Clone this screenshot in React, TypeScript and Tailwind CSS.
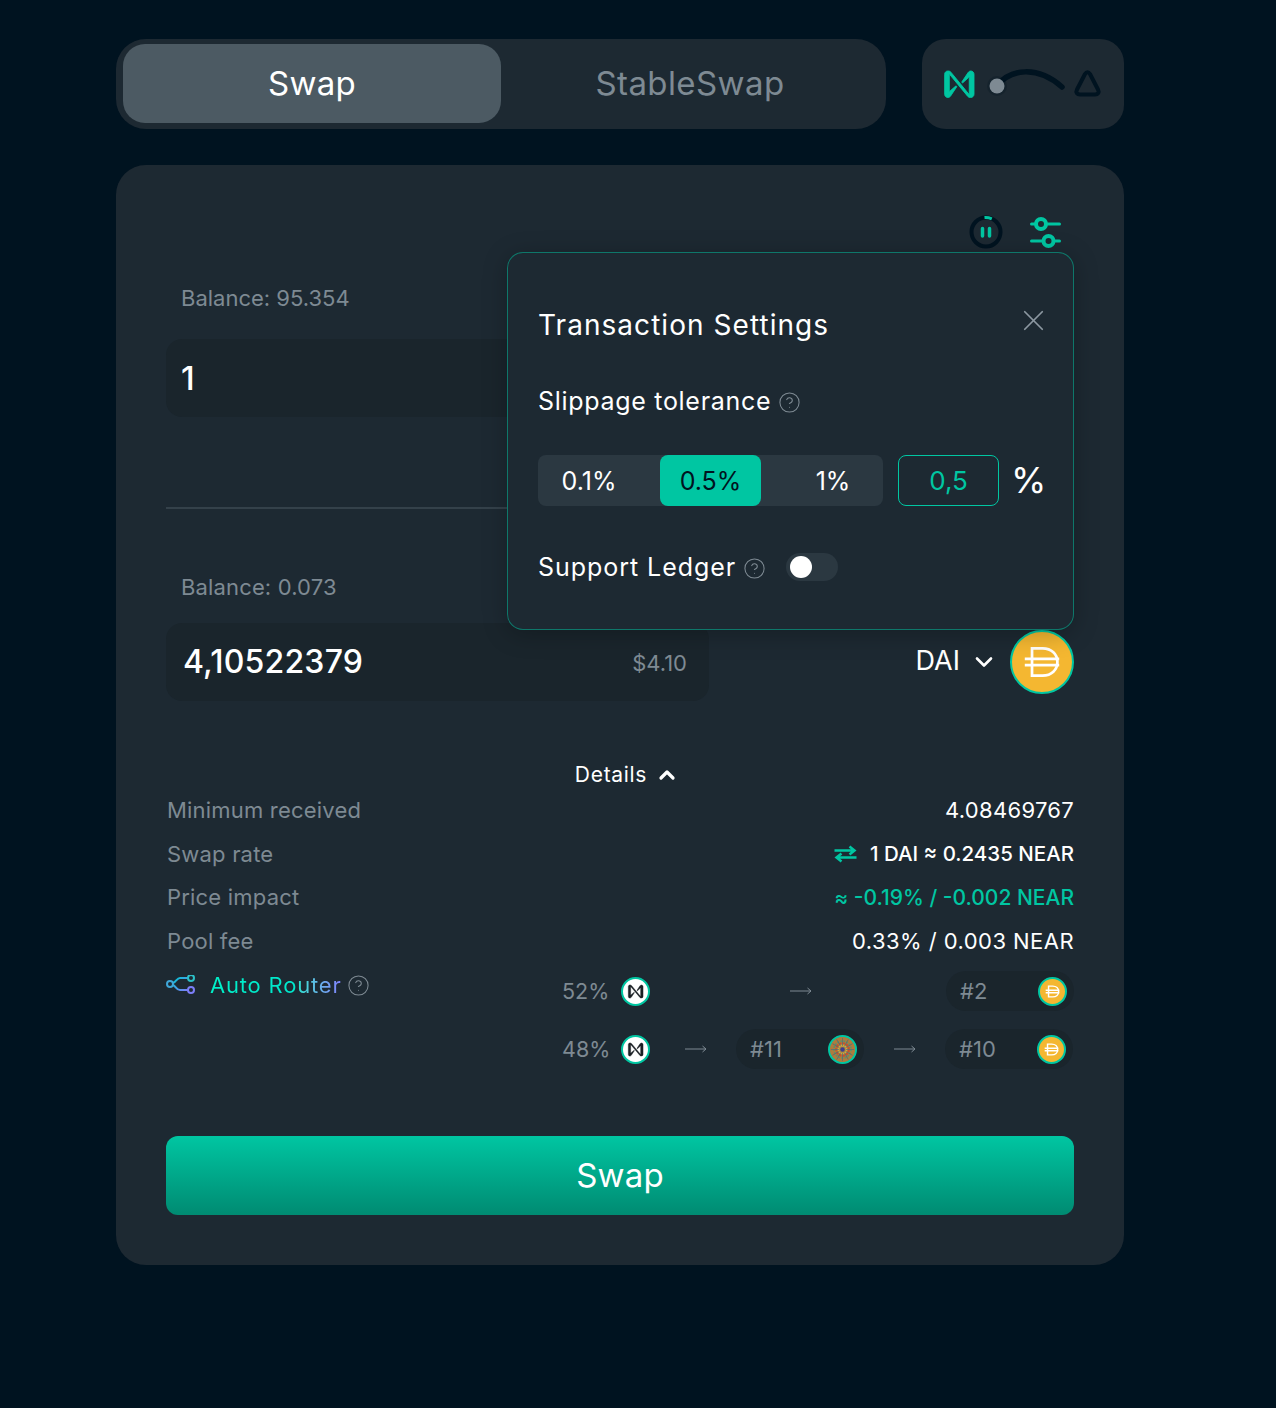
import { ChevronDown, ChevronUp, CircleHelp, X } from "lucide-react";

const nearPath =
  "M24.5 5.3 18.8 13.7c-.4.6.4 1.3.9.8l5.6-4.9c.1-.1.4 0 .4.2v15.1c0 .2-.3.3-.4.2L8.4 4.8C7.8 4.1 7 3.7 6.1 3.7h-.6C3.8 3.7 2.5 5 2.5 6.7v18.6c0 1.7 1.4 3 3 3 1 0 2-.5 2.6-1.4l5.7-8.4c.4-.6-.4-1.3-.9-.8l-5.6 4.8c-.1.1-.4 0-.4-.2V7.2c0-.2.3-.3.4-.2l17 20.2c.5.7 1.4 1 2.3 1h.6c1.7 0 3-1.3 3-3V6.7c0-1.7-1.4-3-3-3-1 0-2 .5-2.7 1.6z";

function DaiIcon({ size, stroke = 1.5 }: { size: string; stroke?: number }) {
  return (
    <div className={`${size} shrink-0 rounded-full border-2 border-[#00c6a2] bg-[#f4b731] p-px`}>
      <svg viewBox="0 0 32 32" className="h-full w-full" fill="none" stroke="#fff" strokeWidth={stroke}>
        <path d="M10.5 8.5h5.800c5 0 8.200 3.200 8.200 7.500s-3.200 7.500-8.200 7.500h-5.800z" />
        <path d="M6.500 14.300h19M6.500 17.700h19" />
      </svg>
    </div>
  );
}

function NearBadge() {
  return (
    <div className="flex h-[29px] w-[29px] shrink-0 items-center justify-center rounded-full border-2 border-[#00c6a2] bg-white">
      <svg viewBox="0 0 32 32" className="h-[17px] w-[17px]" fill="#1a1f24" stroke="#1a1f24" strokeWidth="0.8">
        <path d={nearPath} />
      </svg>
    </div>
  );
}

function MandalaIcon() {
  const spokes = [0, 30, 60, 90, 120, 150];
  return (
    <div className="h-[29px] w-[29px] shrink-0 overflow-hidden rounded-full border-2 border-[#00c6a2] bg-[#a8803f]">
      <svg viewBox="0 0 28 28" className="h-full w-full" fill="none">
        <circle cx="14" cy="14" r="12" stroke="#b2793c" strokeWidth="4" strokeDasharray="3 1" />
        <circle cx="14" cy="14" r="9.500" stroke="#5f8f6a" strokeWidth="2" strokeDasharray="2 1.500" />
        <circle cx="14" cy="14" r="7" stroke="#c94f2c" strokeWidth="2.500" strokeDasharray="3 1" />
        <circle cx="14" cy="14" r="4.500" stroke="#d0a93a" strokeWidth="2" />
        <circle cx="14" cy="14" r="2.500" fill="#3d3f8f" />
        {spokes.map((deg) => (
          <path key={deg} d="M14 1v9M14 18v9" stroke="#4f6f7a" strokeWidth=".8" transform={`rotate(${deg} 14 14)`} />
        ))}
      </svg>
    </div>
  );
}

function Help({ className }: { className: string }) {
  return <CircleHelp className={className} strokeWidth={1.1} />;
}

function Arrow() {
  return (
    <svg viewBox="0 0 22 10" className="h-[10px] w-[22px] shrink-0" fill="none" stroke="#7e8a93" strokeWidth="1">
      <path d="M0 5h21M17.500 2l3.500 3-3.500 3" />
    </svg>
  );
}

function PoolPill({ label, icon }: { label: string; icon: React.ReactNode }) {
  return (
    <div className="flex h-10 w-[128px] shrink-0 items-center justify-between rounded-full bg-[#1a252c] pl-[14px] pr-[7px] text-[22px] text-[#7e8a93]">
      <span>{label}</span>
      {icon}
    </div>
  );
}

function DetailRow({ label, children }: { label: string; children: React.ReactNode }) {
  return (
    <div className="flex h-[43.5px] items-center justify-between pl-px">
      <span className="text-[22px] tracking-[0.2px] text-[#7e8a93]">{label}</span>
      {children}
    </div>
  );
}

function SettingsPopup() {
  return (
    <div className="absolute left-[391px] top-[87px] h-[378px] w-[567px] rounded-2xl border border-[#00c6a2]/50 bg-[#1d2932] px-[30px] shadow-[0_4px_24px_rgba(0,0,0,0.25)]">
      <div className="mt-[54px] flex h-9 items-center justify-between">
        <span className="text-[28px] tracking-[1.05px] text-white">Transaction Settings</span>
        <X className="mb-[10px] mr-[-8px] h-[35px] w-[35px] text-[#8c98a1]" strokeWidth={1.2} />
      </div>
      <div className="mt-[43px] flex h-8 items-center gap-[7px] text-[25px] tracking-[0.7px] text-white">
        Slippage tolerance
        <Help className="h-[23px] w-[23px] text-[#7e8a93]" />
      </div>
      <div className="mt-[37px] flex h-[51px] items-center">
        <div className="flex h-full w-[345px] shrink-0 items-center rounded-lg bg-[#2b3841] pt-0.5 text-[25px] text-white">
          <div className="w-[122px] pr-[20px] text-center">0.1%</div>
          <div className="-mt-0.5 flex h-[51px] w-[101px] items-center justify-center rounded-lg bg-[#00c6a2] pt-0.5 text-[#001320]">0.5%</div>
          <div className="w-[122px] pl-[22px] text-center">1%</div>
        </div>
        <div className="ml-[15px] flex h-full w-[101px] shrink-0 items-center justify-center rounded-lg border border-[#00c6a2] text-[26px] text-[#00c6a2]">
          0,5
        </div>
        <span className="ml-[12px] pb-0.5 text-[36px] text-white">%</span>
      </div>
      <div className="mt-[46px] flex h-8 items-center text-[25px] tracking-[0.95px] text-white">
        Support Ledger
        <Help className="ml-[7px] h-[23px] w-[23px] text-[#7e8a93]" />
        <div className="ml-[20px] flex h-[28px] w-[52px] -translate-y-px items-center rounded-full bg-[#2b3841] pl-1">
          <div className="h-[22px] w-[22px] rounded-full bg-white" />
        </div>
      </div>
    </div>
  );
}

export default function App() {
  return (
    <div className="min-h-[1408px] bg-[#001320] pl-[116px] pt-[39px] font-['Inter','Liberation_Sans',sans-serif]">
      <div className="w-[1008px]">
        <div className="flex gap-9">
          <div className="flex h-[90px] w-[770px] items-center rounded-[30px] bg-[#1d2932] pb-px pl-[7px]">
            <div className="flex h-[79px] w-[378px] items-center justify-center rounded-[22px] bg-[#4c5a63] text-[33px] tracking-[0.3px] text-white">
              Swap
            </div>
            <div className="flex h-[79px] w-[378px] items-center justify-center text-[33px] tracking-[0.4px] text-[#7e8a93]">
              StableSwap
            </div>
          </div>
          <div className="flex h-[90px] w-[202px] items-center rounded-[24px] bg-[#1d2932]">
            <svg viewBox="0 0 202 90" className="h-[90px] w-[202px]" fill="none">
              <g transform="translate(20 28) scale(1.06 1.08)">
                <path d={nearPath} fill="#00c6a2" stroke="#00c6a2" strokeWidth="0.8" />
              </g>
              <path d="M75 47C88 30 115 26 140 48" stroke="#001320" strokeWidth="5.500" strokeLinecap="round" />
              <circle cx="75" cy="47" r="10" fill="#001320" fillOpacity=".25" />
              <circle cx="75" cy="47" r="7.500" fill="#7e8a93" />
              <path d="M163 35c1.500-2.500 3.500-2.500 5 0l8 15.500c1.500 3 0 5-3 5h-15c-3 0-4.500-2-3-5z" stroke="#001320" strokeWidth="4" strokeLinejoin="round" />
            </svg>
          </div>
        </div>

        <div className="relative mt-9 h-[1100px] rounded-[30px] bg-[#1d2932] px-[50px] pt-[50px]">
          <div className="flex h-[33px] items-center justify-end gap-[26px] pr-[13px]">
            <svg viewBox="0 0 34 34" className="h-[34px] w-[34px]" fill="none">
              <circle cx="17" cy="17" r="14.500" stroke="#001320" strokeWidth="4" />
              <path d="M15.500 2.600c2.600-.2 5 .3 7.300 1.300" stroke="#00c6a2" strokeWidth="3" />
              <path d="M13.500 13.500v7.500M20.500 13.500v7.500" stroke="#00c6a2" strokeWidth="3.500" strokeLinecap="round" />
            </svg>
            <svg viewBox="0 0 32 32" className="h-[32px] w-[32px]" fill="none" stroke="#00c6a2" strokeWidth="3" strokeLinecap="round">
              <path d="M2.500 8h5M17.500 8h13M2.500 25h12M24.500 25h6" />
              <circle cx="12" cy="8" r="5" strokeWidth="4" />
              <circle cx="19.500" cy="25" r="5" strokeWidth="4" />
            </svg>
          </div>

          <div className="mt-[38px] h-6 pl-[15px] text-[22px] leading-6 text-[#7e8a93]">Balance: 95.354</div>
          <div className="mt-[29px] flex h-[78px] w-[543px] items-center rounded-2xl bg-[#1a252c] pl-[15px] pt-0.5 text-[33px] font-medium text-white">
            1
          </div>
          <div className="mt-[90px] h-0.5 bg-[#34414a]" />

          <div className="mt-[66px] h-6 pl-[15px] text-[22px] leading-6 tracking-[0.15px] text-[#7e8a93]">Balance: 0.073</div>
          <div className="mt-6 flex items-center justify-between">
            <div className="flex h-[78px] w-[543px] items-center justify-between rounded-2xl bg-[#1a252c] pl-[17px] pr-[22px]">
              <span className="pb-px text-[32px] font-medium tracking-[0.2px] text-white">4,10522379</span>
              <span className="pt-[3px] text-[22px] text-[#7e8a93]">$4.10</span>
            </div>
            <div className="flex items-center">
              <span className="pb-px text-[27px] text-white">DAI</span>
              <ChevronDown className="ml-[10px] mr-[12px] h-7 w-7 text-white" strokeWidth={2.25} />
              <DaiIcon size="h-[64px] w-[64px]" />
            </div>
          </div>

          <div className="mt-[62px] flex h-6 items-center justify-center pl-[14px] text-[21px] tracking-[0.7px] text-white">
            Details
            <ChevronUp className="ml-[8px] h-[24px] w-[24px]" strokeWidth={3.25} />
          </div>
          <div className="mt-0.5">
            <DetailRow label="Minimum received">
              <span className="text-[22px] tracking-[0.3px] text-white">4.08469767</span>
            </DetailRow>
            <DetailRow label="Swap rate">
              <div className="flex items-center text-[20.5px] font-medium text-white">
                <svg viewBox="0 0 22 18" className="mr-[13px] h-[18px] w-[23px]" fill="none" stroke="#00c6a2" strokeWidth="2.500">
                  <path d="M0 5.500h20M15 1.500l5 4-5 4M22 12.500H2M7 8.500l-5 4 5 4" />
                </svg>
                1 DAI ≈ 0.2435 NEAR
              </div>
            </DetailRow>
            <DetailRow label="Price impact">
              <span className="text-[21px] font-medium text-[#00c6a2]">≈ -0.19% / -0.002 NEAR</span>
            </DetailRow>
            <DetailRow label="Pool fee">
              <span className="text-[22px] tracking-[0.45px] text-white">0.33% / 0.003 NEAR</span>
            </DetailRow>
          </div>

          <div className="flex items-start justify-between">
            <div className="flex h-11 items-center">
              <svg viewBox="0 0 30 20" className="mr-[14px] h-[20px] w-[30px]" fill="none" strokeWidth="2">
                <defs>
                  <linearGradient id="routerGrad" x1="0" y1="0" x2="1" y2="1">
                    <stop offset="0" stopColor="#00c6d2" />
                    <stop offset="1" stopColor="#7c7ef8" />
                  </linearGradient>
                </defs>
                <path d="M7 8c3-1 4-5 7-5h8M7 10c3 1 3 5 7 5h8" stroke="url(#routerGrad)" />
                <circle cx="4" cy="9" r="3" stroke="#3fa6d8" />
                <circle cx="25" cy="3" r="3" stroke="#2cc0c8" />
                <circle cx="25" cy="15" r="3" stroke="#7c7ef8" />
              </svg>
              <span className="bg-gradient-to-r from-[#00f0c8] via-[#00e6cc] via-65% to-[#8080ff] bg-clip-text text-[22px] tracking-[0.8px] text-transparent">
                Auto Router
              </span>
              <Help className="ml-[6px] h-[23px] w-[23px] text-[#7e8a93]" />
            </div>

            <div className="mt-2 w-[512px] text-[#7e8a93]">
              <div className="flex h-10 items-center">
                <div className="flex w-[88px] items-center justify-between text-[21.5px]">
                  52%
                  <NearBadge />
                </div>
                <div className="flex flex-1 justify-center pl-[6px]">
                  <Arrow />
                </div>
                <PoolPill label="#2" icon={<DaiIcon size="h-[29px] w-[29px]" stroke={2} />} />
              </div>
              <div className="mt-[18px] flex h-10 items-center">
                <div className="flex w-[88px] items-center justify-between text-[21.5px]">
                  48%
                  <NearBadge />
                </div>
                <div className="ml-[35px]">
                  <Arrow />
                </div>
                <div className="ml-[29px]">
                  <PoolPill label="#11" icon={<MandalaIcon />} />
                </div>
                <div className="ml-[30px]">
                  <Arrow />
                </div>
                <div className="ml-[29px]">
                  <PoolPill label="#10" icon={<DaiIcon size="h-[29px] w-[29px]" stroke={2} />} />
                </div>
              </div>
            </div>
          </div>

          <button className="mt-[67px] flex h-[79px] w-full items-center justify-center rounded-xl bg-gradient-to-b from-[#00c6a2] to-[#008b72] text-[33px] tracking-[0.2px] text-white">
            Swap
          </button>

          <SettingsPopup />
        </div>
      </div>
    </div>
  );
}
